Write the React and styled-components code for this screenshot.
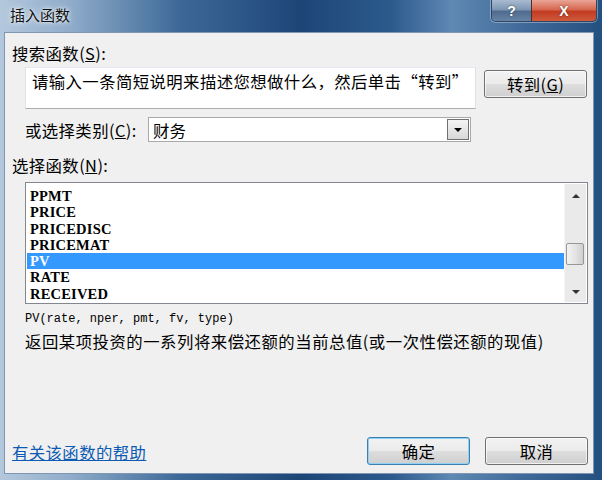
import React from 'react';
import styled, { createGlobalStyle, css } from 'styled-components';

const GlobalStyle = createGlobalStyle`
	html, body {
		margin: 0;
		padding: 0;
		background: #fff;
	}
	body {
		font-family: "Noto Sans CJK SC", "Liberation Sans", sans-serif;
	}
`;

const CJK = `"Noto Sans CJK SC", "Liberation Sans", sans-serif`;
const MONO = `"Liberation Mono", "Noto Sans CJK SC", monospace`;
const SERIF = `"Liberation Serif", "Noto Sans CJK SC", serif`;

const Frame = styled.div`
	width: 602px;
	height: 480px;
	box-sizing: border-box;
	display: flex;
	flex-direction: column;
	padding: 0 8px 6px 4px;
	background: linear-gradient(90deg, #b4c8dd 0%, #8eabc9 12%, #3c6897 30%, #1d4677 50%, #2c5a8c 65%, #5f88b3 75%, #3d6796 88%, #24507f 100%);
	overflow: hidden;
`;

const TitleBar = styled.div`
	height: 32px;
	display: flex;
	align-items: flex-start;
	justify-content: space-between;
	flex-shrink: 0;
`;

const Title = styled.div`
	font-family: ${CJK};
	font-size: 15px;
	line-height: 30px;
	padding-left: 6px;
	color: #111;
	text-shadow: 0 0 6px rgba(255, 255, 255, 0.9), 0 0 3px rgba(255, 255, 255, 0.8);
`;

const Caption = styled.div`
	display: flex;
	margin-right: -3px;
	border: 1px solid #2f4561;
	border-top: none;
	border-radius: 0 0 5px 5px;
	overflow: hidden;
	box-shadow: 0 0 0 1px rgba(255, 255, 255, 0.35);
`;

const CapButton = styled.div`
	height: 21px;
	display: flex;
	align-items: center;
	justify-content: center;
	color: #fff;
	font-family: "Liberation Sans", sans-serif;
	font-weight: bold;
	font-size: 14px;
	text-shadow: 0 0 2px rgba(0, 0, 0, 0.6);
	${p => p.$close ? css`
		width: 64px;
		background: linear-gradient(180deg, #e9a597 0%, #d7684f 45%, #c23c22 55%, #cf5a3c 100%);
		border-left: 1px solid #5a2a22;
	` : css`
		width: 39px;
		background: linear-gradient(180deg, #a9bbd0 0%, #7f97b4 45%, #4f6c90 55%, #6784a6 100%);
	`}
`;

const Body = styled.div`
	flex: 1;
	display: flex;
	flex-direction: column;
	background: #f0f0f0;
	border: 1px solid #7f97b2;
	padding: 10px 5px 8px 7px;
	font-family: ${CJK};
	font-size: 16.4px;
	color: #000;
`;

const Label = styled.div`
	line-height: 20px;
	letter-spacing: 0.4px;
	margin-top: ${p => p.$top || 0}px;
	u { text-decoration: underline; }
`;

const Indent = styled.div`
	display: flex;
	padding-left: 13px;
	margin-top: ${p => p.$top || 0}px;
	align-items: ${p => p.$align || 'flex-start'};
`;

const SearchBox = styled.div`
	width: 451px;
	height: 42px;
	box-sizing: border-box;
	background: #fff;
	border: 1px solid #abadb3;
	border-top-color: #e3e9ef;
	border-left-color: #e2e3ea;
	border-right-color: #dbdfe6;
	padding: 3px 0 0 6px;
	line-height: 20px;
	letter-spacing: 0.4px;
	white-space: nowrap;
`;

const Button = styled.div`
	width: ${p => p.$w || 103}px;
	height: 28px;
	box-sizing: border-box;
	display: flex;
	align-items: center;
	justify-content: center;
	border-radius: 3px;
	border: 1px solid ${p => p.$focus ? '#3c7fb1' : '#707070'};
	background: linear-gradient(180deg, #f2f2f2 0%, #ebebeb 48%, #dddddd 52%, #cfcfcf 100%);
	box-shadow: inset 0 0 0 1px ${p => p.$focus ? '#8fd1f3' : 'rgba(255,255,255,0.7)'};
	font-size: 16.4px;
	letter-spacing: 0.4px;
	margin-left: ${p => p.$ml || 0}px;
	margin-top: ${p => p.$mt || 0}px;
	u { text-decoration: underline; }
`;

const CategoryLabel = styled(Label)`
	width: 123px;
	flex-shrink: 0;
`;

const Select = styled.div`
	width: 323px;
	height: 25px;
	box-sizing: border-box;
	display: flex;
	align-items: center;
	background: #fff;
	border: 1px solid #a9a9a9;
	padding: 1px;
`;

const SelectValue = styled.div`
	flex: 1;
	padding-left: 3px;
	line-height: 20px;
`;

const DropButton = styled.div`
	width: 22px;
	height: 21px;
	box-sizing: border-box;
	display: flex;
	align-items: center;
	justify-content: center;
	border: 1px solid #707070;
	background: linear-gradient(180deg, #f4f4f4 0%, #e6e6e6 50%, #d8d8d8 100%);
`;

const Arrow = styled.span`
	width: 0;
	height: 0;
	border-left: ${p => p.$size || 5}px solid transparent;
	border-right: ${p => p.$size || 5}px solid transparent;
	${p => p.$up
		? css`border-bottom: ${p.$size ? p.$size : 5}px solid ${p.$color || '#000'};`
		: css`border-top: ${p.$size ? p.$size : 5}px solid ${p.$color || '#000'};`}
`;

const ListBox = styled.div`
	width: 563px;
	height: 122px;
	box-sizing: border-box;
	display: flex;
	background: #fff;
	border: 1px solid #828790;
	padding: 1px;
`;

const Items = styled.div`
	flex: 1;
	padding-top: 4px;
`;

const Item = styled.div`
	height: 16.3px;
	line-height: 16.3px;
	padding-left: 3px;
	font-family: ${SERIF};
	font-size: 14.5px;
	font-weight: bold;
	letter-spacing: 0.2px;
	color: ${p => p.$selected ? '#fff' : '#000'};
	background: ${p => p.$selected ? '#3399ff' : 'transparent'};
`;

const ScrollBar = styled.div`
	width: 21px;
	display: flex;
	flex-direction: column;
	align-items: center;
	justify-content: space-between;
	background: #eaeaea;
	border-left: 1px solid #f5f5f5;
	padding: 10px 0 8px;
	position: relative;
`;

const Thumb = styled.div`
	position: absolute;
	left: 1px;
	top: 59px;
	width: 18px;
	height: 22px;
	box-sizing: border-box;
	border: 1px solid #979797;
	border-radius: 2px;
	background: linear-gradient(90deg, #f3f3f3 0%, #e4e4e4 50%, #cfcfcf 100%);
`;

const Signature = styled.div`
	padding-left: 13px;
	margin-top: 8px;
	font-family: ${MONO};
	font-size: 12px;
	line-height: 14px;
`;

const Description = styled.div`
	padding-left: 13px;
	margin-top: 5px;
	line-height: 20px;
	letter-spacing: 0.5px;
	white-space: nowrap;
`;

const Footer = styled.div`
	margin-top: auto;
	display: flex;
	align-items: center;
`;

const HelpLink = styled.a`
	color: #0d5bb3;
	text-decoration: underline;
	line-height: 20px;
	margin-right: auto;
	margin-top: 1px;
	letter-spacing: 0.4px;
`;

const functions = ['PPMT', 'PRICE', 'PRICEDISC', 'PRICEMAT', 'PV', 'RATE', 'RECEIVED'];

export default function App() {
	return (
		<>
			<GlobalStyle />
			<Frame>
				<TitleBar>
					<Title>插入函数</Title>
					<Caption>
						<CapButton>?</CapButton>
						<CapButton $close>X</CapButton>
					</Caption>
				</TitleBar>
				<Body>
					<Label>搜索函数(<u>S</u>):</Label>
					<Indent $top={4}>
						<SearchBox>请输入一条简短说明来描述您想做什么，然后单击“转到”</SearchBox>
						<Button $ml={8} $mt={3}>转到(<u>G</u>)</Button>
					</Indent>
					<Indent $top={8} $align="center">
						<CategoryLabel>或选择类别(<u>C</u>):</CategoryLabel>
						<Select>
							<SelectValue>财务</SelectValue>
							<DropButton><Arrow $size={4} /></DropButton>
						</Select>
					</Indent>
					<Label $top={13}>选择函数(<u>N</u>):</Label>
					<Indent $top={7}>
						<ListBox>
							<Items>
								{functions.map(f => (
									<Item key={f} $selected={f === 'PV'}>{f}</Item>
								))}
							</Items>
							<ScrollBar>
								<Arrow $up $size={4} $color="#333" />
								<Thumb />
								<Arrow $size={4} $color="#333" />
							</ScrollBar>
						</ListBox>
					</Indent>
					<Signature>PV(rate, nper, pmt, fv, type)</Signature>
					<Description>返回某项投资的一系列将来偿还额的当前总值(或一次性偿还额的现值)</Description>
					<Footer>
						<HelpLink>有关该函数的帮助</HelpLink>
						<Button $focus>确定</Button>
						<Button $ml={15}>取消</Button>
					</Footer>
				</Body>
			</Frame>
		</>
	);
}
